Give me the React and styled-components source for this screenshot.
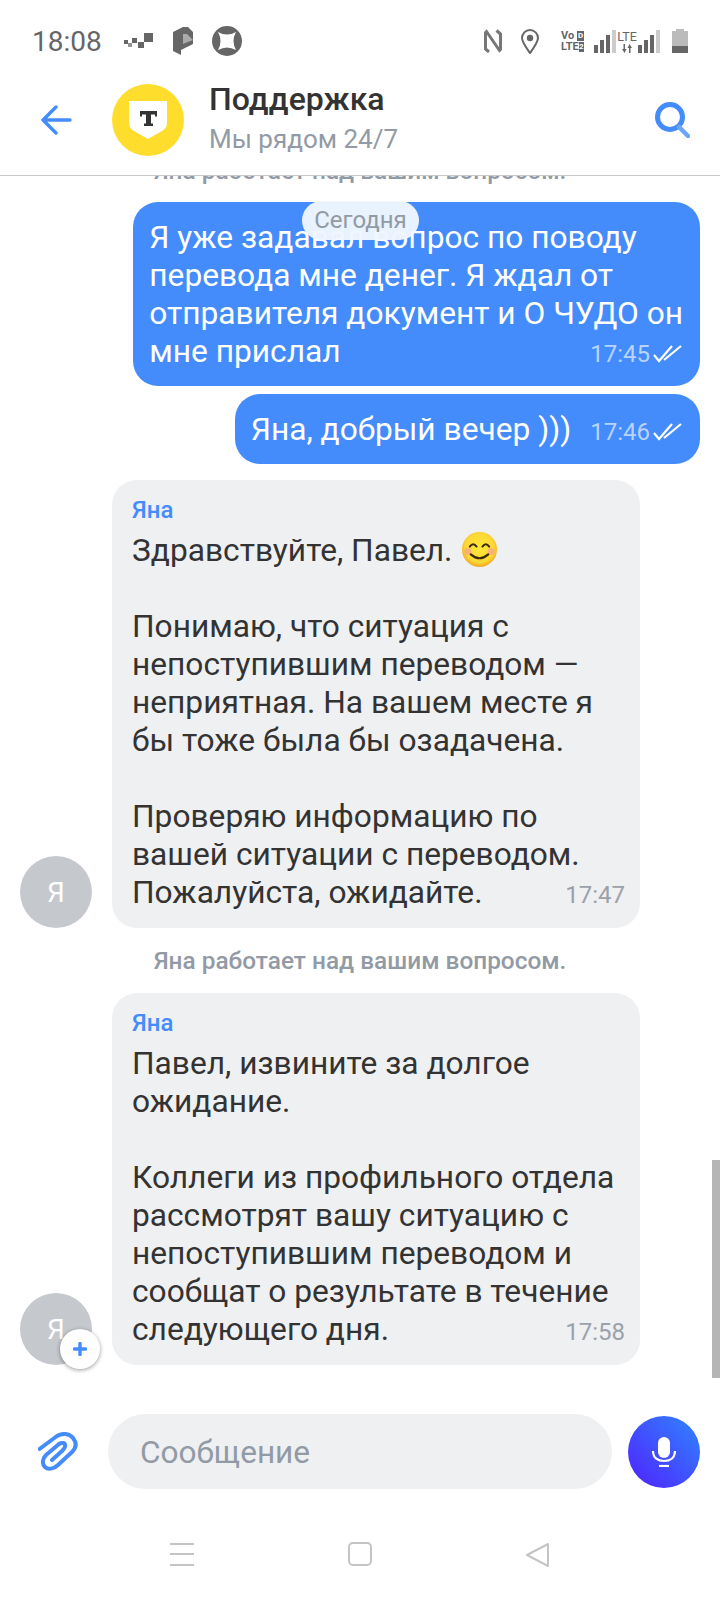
import React from 'react';
import styled, { createGlobalStyle } from 'styled-components';

const Global = createGlobalStyle`
  html, body { margin: 0; padding: 0; background: #fff; }
  body { font-family: Roboto, "Noto Sans", sans-serif; }
  * { box-sizing: border-box; }
`;
const Page = styled.div`
  width: 720px; height: 1600px; display: flex; flex-direction: column; background: #fff; overflow: hidden;
`;
const StatusBar = styled.div`
  height: 82px; flex: none; display: flex; align-items: center; padding: 0 32px; color: #666;
`;
const Clock = styled.span`
  font-size: 28px; width: 92px; color: #666;
`;
const StatusLeft = styled.div`display: flex; align-items: center; gap: 19px;`;
const StatusRight = styled.div`margin-left: auto; display: flex; align-items: center;`;
const VoLte = styled.div`
  display: flex; flex-direction: column; gap: 1px; font-size: 11px; line-height: 10px; font-weight: 700; color: #666; width: 23px; margin: 0 10px 0 22px;
`;
const VoLine = styled.div`display: flex; justify-content: space-between;`;
const Chip = styled.span`background: #666; color: #fff; width: 7px; font-size: 8px; text-align: center;`;
const LteMini = styled.div`
  width: 22px; display: flex; flex-direction: column; align-items: center; gap: 1px; font-size: 12.5px; line-height: 13px; color: #666;
`;
const Header = styled.header`
  height: 94px; flex: none; display: flex; align-items: center; padding: 0 30px 18px 41px; border-bottom: 1px solid #c9c9c9;
`;
const HeadAvatar = styled.div`
  width: 72px; height: 72px; border-radius: 50%; background: #ffdd2d; margin-left: 40px; display: flex; align-items: center; justify-content: center; flex: none;
`;
const HeadText = styled.div`margin-left: 25px; padding-bottom: 3px; display: flex; flex-direction: column; flex: 1;`;
const Title = styled.div`font-size: 32px; line-height: 38px; margin-bottom: 3px; font-weight: 500; color: #333;`;
const Subtitle = styled.div`font-size: 26px; line-height: 36px; color: #929aa5;`;
const Chat = styled.main`
  position: relative; height: 1202px; flex: none; overflow: hidden; padding: 0 20px; display: flex; flex-direction: column;
`;
const Note = styled.div`
  height: 30px; line-height: 30px; text-align: center; font-size: 24.4px; font-weight: 500; color: #929aa5; flex: none;
  margin: ${p => p.$first ? '-20px 0 16px' : '18px 0 17px'};
`;
const DatePill = styled.div`
  position: absolute; top: 25px; left: 302px; width: 117px; height: 39px; border-radius: 20px; background: rgba(240,246,255,.96);
  font-size: 24px; line-height: 39px; text-align: center; color: #929aa5;
`;
const Outgoing = styled.div`
  align-self: flex-end; width: fit-content; flex: none; background: #448cfb; color: #fff; border-radius: 25px; padding: 17px 17px 15px 16px;
  font-size: 31.7px; line-height: 38px; margin-bottom: ${p => p.$mb}px;
`;
const Row = styled.div`display: flex; align-items: flex-end; gap: 20px; flex: none;`;
const Avatar = styled.div`
  position: relative; width: 72px; height: 72px; border-radius: 50%; background: #c5c8cd; color: #fff; font-size: 28px; display: flex; align-items: center; justify-content: center; flex: none;
`;
const Badge = styled.div`
  position: absolute; left: 40px; top: 36px; width: 40px; height: 40px; border-radius: 50%; background: #fff; box-shadow: 0 1px 4px rgba(0,0,0,.4); display: flex; align-items: center; justify-content: center;
`;
const Incoming = styled.div`
  width: 528px; background: #eff0f2; border-radius: 25px; padding: 15px 20px 16px; color: #333; font-size: 31.7px; line-height: 38px;
`;
const Sender = styled.div`font-size: 24px; line-height: 30px; margin-bottom: 7px; font-weight: 500; color: #448cfb;`;
const Meta = styled.span`
  float: right; display: inline-flex; align-items: center; gap: 3px; font-size: 24px; line-height: 32px; margin: ${p => p.$out ? '5px 0 0 19px' : '5px -5px 0 0'};
  color: ${p => p.$out ? '#b8d3fd' : '#9aa1aa'};
`;
const Emoji = styled.svg`vertical-align: -6px; margin-left: 2px;`;
const Scrollbar = styled.div`position: absolute; right: 0; bottom: 0; width: 8px; height: 218px; background: #b5b5b5;`;
const Composer = styled.div`
  flex: none; display: flex; align-items: center; padding: 36px 20px 0 38px; height: 111px;
`;
const Input = styled.div`
  margin-left: 30px; width: 504px; height: 75px; border-radius: 38px; background: #eff0f2; color: #929aa5; font-size: 31.6px; line-height: 78px; padding-left: 32px;
`;
const Mic = styled.div`
  margin-left: 16px; width: 72px; height: 72px; border-radius: 50%; background: linear-gradient(225deg, #2f86ff, #5120ff); display: flex; align-items: center; justify-content: center;
`;
const Nav = styled.nav`
  flex: 1; display: flex; justify-content: center; align-items: flex-start; gap: 154px; padding: 53px 0 0 0;
`;

const Checks = () => (
  <svg width="30" height="20" viewBox="0 0 30 20" fill="none" stroke="#fff" strokeWidth="2.200">
    <path d="M1 11l5 6L19 2" /><path d="M11 16L28 2" />
  </svg>
);
const Bars = () => (
  <svg width="22" height="23" viewBox="0 0 22 23">
    <rect x="0" y="15" width="4" height="8" fill="#666"/><rect x="6" y="10" width="4" height="13" fill="#666"/><rect x="12" y="5" width="4" height="18" fill="#666"/><rect x="18" y="0" width="4" height="23" fill="#ccc"/>
  </svg>
);

export default function App() {
  return (
    <Page>
      <Global />
      <StatusBar>
        <Clock>18:08</Clock>
        <StatusLeft>
          <svg width="30" height="16" viewBox="0 0 30 16" fill="#666">
            <rect x="0" y="7" width="4" height="4"/><rect x="4" y="10" width="4" height="4" opacity=".7"/><rect x="8" y="5" width="5" height="5"/><rect x="14" y="9" width="6" height="6"/><rect x="20" y="0" width="9" height="9"/>
          </svg>
          <svg width="20" height="28" viewBox="0 0 20 28"><path d="M0 5L10 0h5l5 5v12L8 23v5L0 24z" fill="#666"/><path d="M10 7h4l6 6-10 4z" fill="#aaa"/></svg>
          <svg width="30" height="30" viewBox="0 0 30 30"><circle cx="15" cy="15" r="15" fill="#666"/><path d="M6 6q9 5 18 0q-5 9 0 18q-9-5-18 0q5-9 0-18z" fill="#fff"/></svg>
        </StatusLeft>
        <StatusRight>
          <svg width="18" height="24" viewBox="0 0 18 24" fill="none" stroke="#777" strokeWidth="3"><path d="M5 23L1.500 20V3.500l1-1 13 19 1-1V5l-4-3.500"/></svg>
          <svg width="18" height="25" viewBox="0 0 18 25" fill="none" style={{marginLeft:19}}><path d="M9 24C4 17 1 13 1 9a8 8 0 0116 0c0 4-3 8-8 15z" stroke="#666" strokeWidth="2"/><circle cx="9" cy="9" r="3.200" fill="#666"/></svg>
          <VoLte>
            <VoLine><span>Vo</span><Chip>D</Chip></VoLine>
            <VoLine><span>LTE</span><Chip>2</Chip></VoLine>
          </VoLte>
          <Bars />
          <LteMini>
            LTE
            <svg width="10" height="9" viewBox="0 0 10 9" fill="#666"><path d="M3 0v5h1.500L2.500 9 0 5h1.500V0zM7 9V4H5.500L7.500 0 10 4H8.500v5z"/></svg>
          </LteMini>
          <Bars />
          <svg width="16" height="24" viewBox="0 0 16 24" style={{marginLeft:12}}><rect x="4" y="0" width="8" height="2" fill="#bbb"/><rect x="0" y="2" width="16" height="15" fill="#bbb"/><rect x="0" y="17" width="16" height="7" fill="#666"/></svg>
        </StatusRight>
      </StatusBar>
      <Header>
        <svg width="31" height="30" viewBox="0 0 31 30" fill="none" stroke="#448cfb" strokeWidth="3.400" strokeLinecap="round" strokeLinejoin="round"><path d="M29 15H2M15 2L2 15l13 13"/></svg>
        <HeadAvatar>
          <svg width="38" height="38" viewBox="0 0 38 38"><path d="M0 0h38v22c0 4-2 6-5 8l-14 8-14-8c-3-2-5-4-5-8z" fill="#fff"/><path d="M11 10h17v5.500h-2V13.500h-4v9h2V25h-9v-2.500h2v-9h-4v2h-2z" fill="#333"/></svg>
        </HeadAvatar>
        <HeadText>
          <Title>Поддержка</Title>
          <Subtitle>Мы рядом 24/7</Subtitle>
        </HeadText>
        <svg width="35" height="36" viewBox="0 0 35 36" fill="none" stroke="#448cfb" strokeLinecap="round"><circle cx="15" cy="15" r="12.500" strokeWidth="5"/><path d="M24 25l9 9" stroke="#6ba4fb" strokeWidth="4.500"/></svg>
      </Header>
      <Chat>
        <Note $first>Яна работает над вашим вопросом.</Note>
        <Outgoing $mb={8}>
          Я уже задавал вопрос по поводу<br/>перевода мне денег. Я ждал от<br/>отправителя документ и О ЧУДО он<br/>мне прислал
          <Meta $out>17:45<Checks /></Meta>
        </Outgoing>
        <Outgoing $mb={16}>
          Яна, добрый вечер )))
          <Meta $out>17:46<Checks /></Meta>
        </Outgoing>
        <Row>
          <Avatar>Я</Avatar>
          <Incoming>
            <Sender>Яна</Sender>
            Здравствуйте, Павел. <Emoji width="35" height="35" viewBox="0 0 36 36">
              <defs><radialGradient id="face" cx="50%" cy="45%" r="55%"><stop offset="0%" stopColor="#ffe838"/><stop offset="75%" stopColor="#fdd835"/><stop offset="100%" stopColor="#f5a623"/></radialGradient></defs>
              <circle cx="18" cy="18" r="18" fill="url(#face)"/>
              <circle cx="6" cy="20" r="3.500" fill="#f7a58f" opacity=".8"/><circle cx="30" cy="20" r="3.500" fill="#f7a58f" opacity=".8"/>
              <path d="M8 15q3.500-5 7 0M21 15q3.500-5 7 0" fill="none" stroke="#3a2a10" strokeWidth="2" strokeLinecap="round"/>
              <path d="M9 23q9 8 18 0" fill="none" stroke="#3a2a10" strokeWidth="2.200" strokeLinecap="round"/>
            </Emoji>
            <br/><br/>
            Понимаю, что ситуация с<br/>непоступившим переводом —<br/>неприятная. На вашем месте я<br/>бы тоже была бы озадачена.
            <br/><br/>
            Проверяю информацию по<br/>вашей ситуации с переводом.<br/>Пожалуйста, ожидайте.
            <Meta>17:47</Meta>
          </Incoming>
        </Row>
        <Note>Яна работает над вашим вопросом.</Note>
        <Row>
          <Avatar>Я<Badge><svg width="14" height="14" viewBox="0 0 14 14" stroke="#448cfb" strokeWidth="3.400" strokeLinecap="round"><path d="M7 1.500v11M1.500 7h11"/></svg></Badge></Avatar>
          <Incoming>
            <Sender>Яна</Sender>
            Павел, извините за долгое<br/>ожидание.
            <br/><br/>
            Коллеги из профильного отдела<br/>рассмотрят вашу ситуацию с<br/>непоступившим переводом и<br/>сообщат о результате в течение<br/>следующего дня.
            <Meta>17:58</Meta>
          </Incoming>
        </Row>
        <Scrollbar />
        <DatePill>Сегодня</DatePill>
      </Chat>
      <Composer>
        <svg width="40" height="40" viewBox="0 0 40 40" fill="none" stroke="#448cfb" strokeWidth="4" strokeLinecap="round" strokeLinejoin="round"><path d="M1.500 17L19 4C24 1 31 1 35 6C39 11 38 16 34 20L20 33C16 37 10 38 7 35C4 32 4 27 8 23L21 12C24 10 27 11 27 13C28 15 26 17 24 19L14 28"/></svg>
        <Input>Сообщение</Input>
        <Mic>
          <svg width="24" height="30" viewBox="0 0 24 30" fill="none"><rect x="6" y="0" width="12" height="21" rx="6" fill="#fff"/><path d="M1 14c0 7 5 10 11 10s11-3 11-10" stroke="#fff" strokeWidth="2.200"/><path d="M7 29h10" stroke="#fff" strokeWidth="2.200"/></svg>
        </Mic>
      </Composer>
      <Nav>
        <svg width="24" height="24" viewBox="0 0 24 24" stroke="#c4c4c4" strokeWidth="1.800"><path d="M0 2h24M0 12h24M0 23h24"/></svg>
        <svg width="24" height="24" viewBox="0 0 24 24" fill="none" stroke="#c4c4c4" strokeWidth="2"><rect x="1" y="1" width="22" height="22" rx="4"/></svg>
        <svg width="24" height="26" viewBox="0 0 24 26" fill="none" stroke="#c4c4c4" strokeWidth="2" strokeLinejoin="round"><path d="M22 2v22L1 13z"/></svg>
      </Nav>
    </Page>
  );
}
